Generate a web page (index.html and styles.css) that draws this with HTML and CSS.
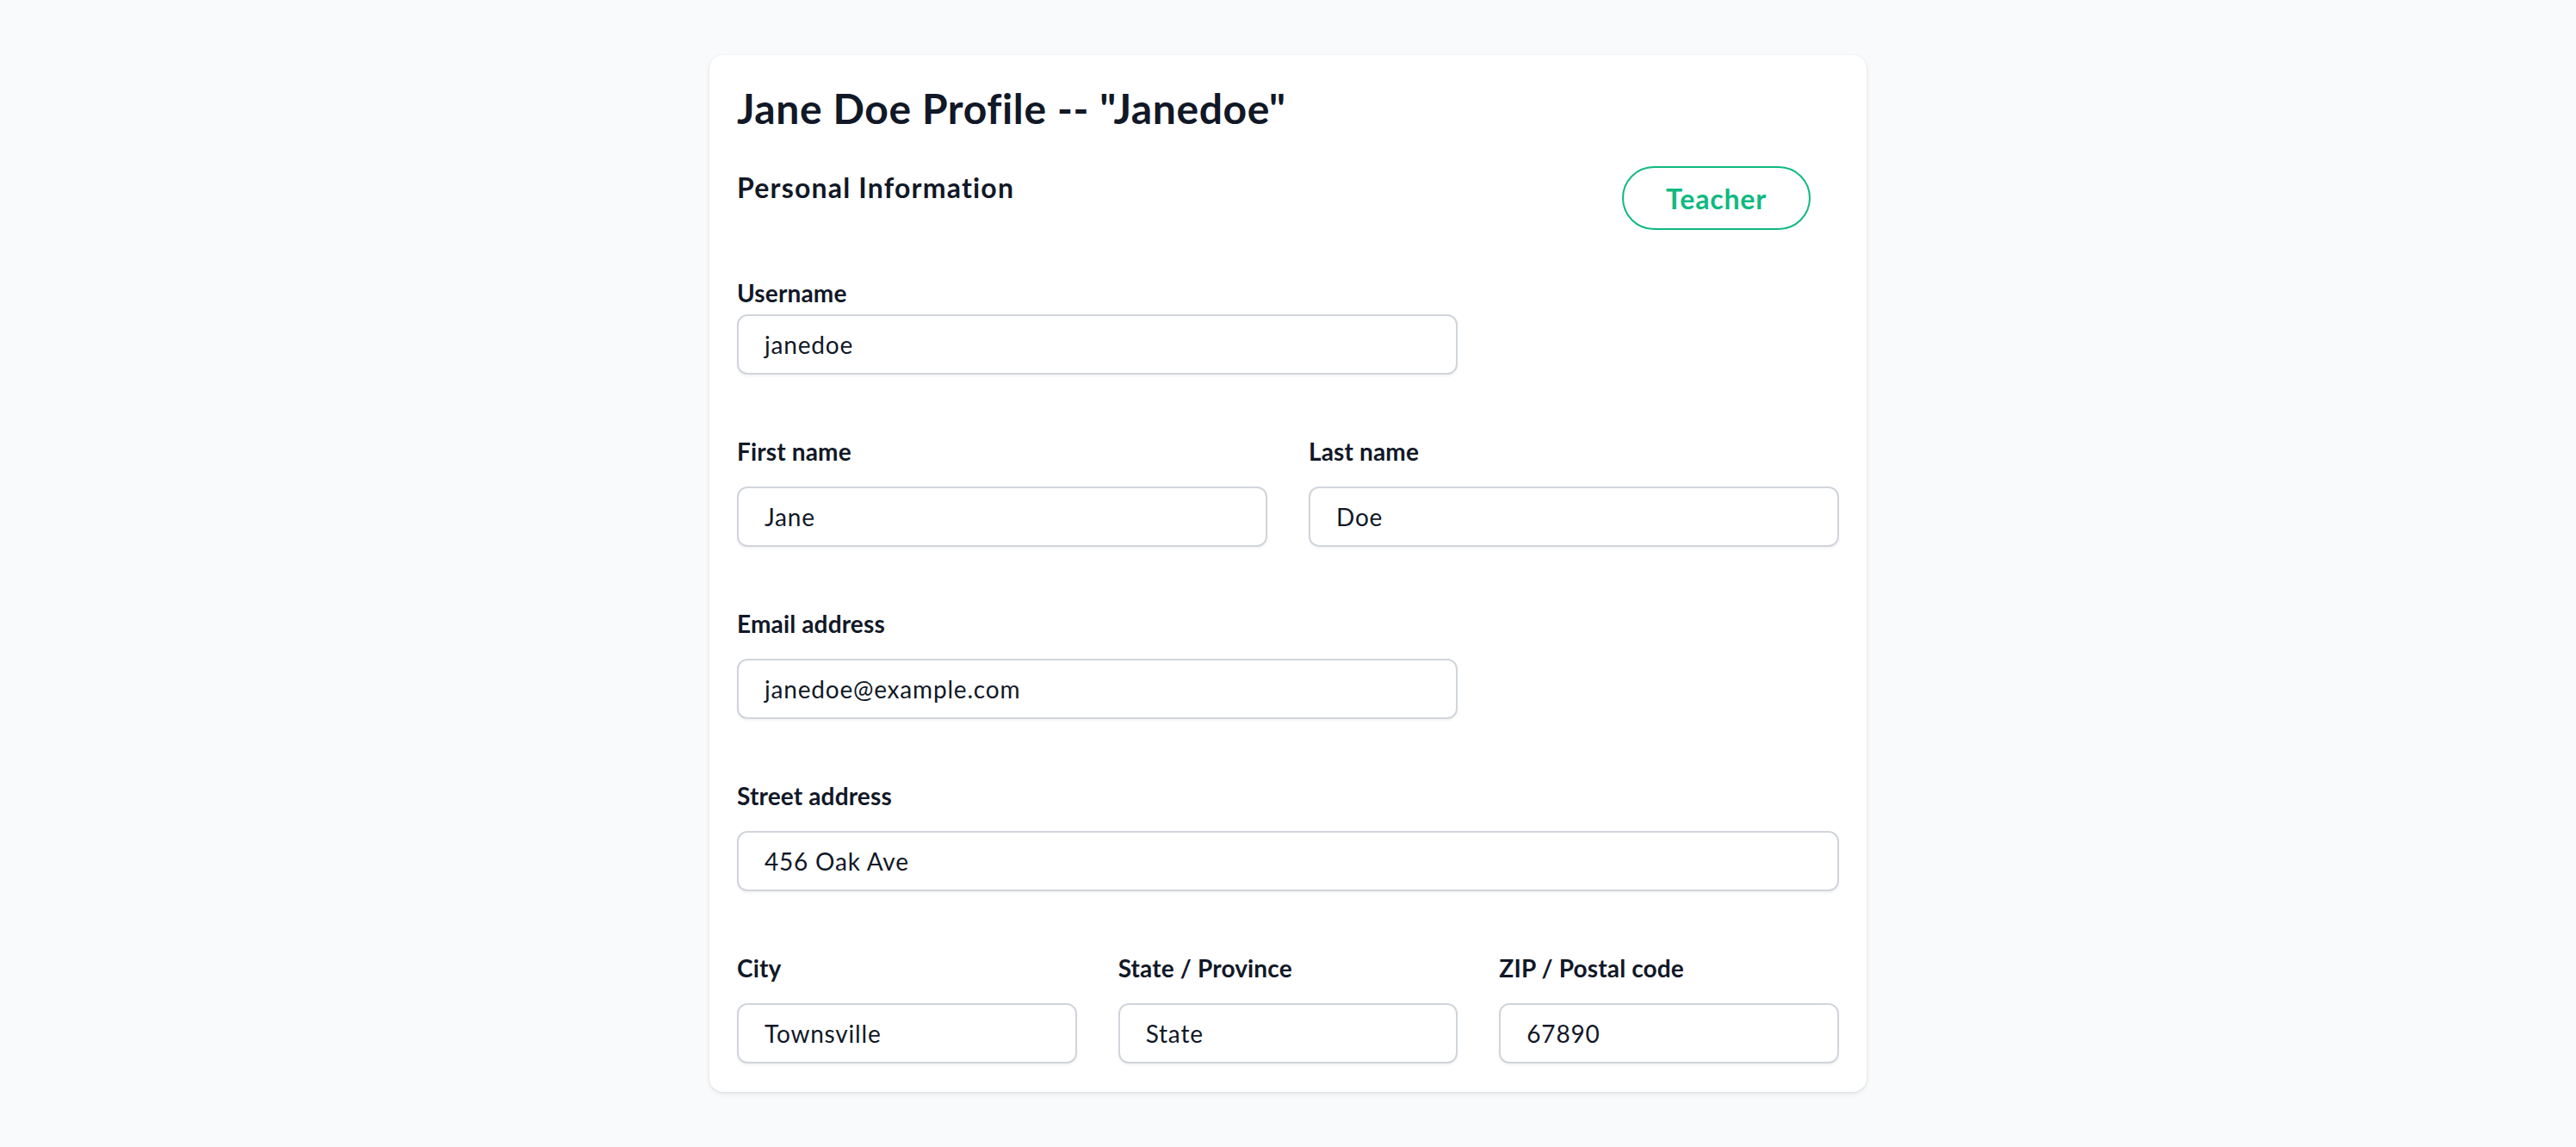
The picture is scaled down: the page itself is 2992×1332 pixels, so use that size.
FILE: index.html
```html
<!DOCTYPE html>
<html lang="en">
<head>
<meta charset="utf-8">
<title>Jane Doe Profile</title>
<link rel="stylesheet" href="styles.css">
</head>
<body>
<main class="card">
  <h1 class="title">Jane Doe Profile -- "Janedoe"</h1>
  <div class="section-head">
    <h2 class="section-title">Personal Information</h2>
    <span class="badge">Teacher</span>
  </div>
  <div class="form-grid">
    <div class="field span-4 first-field">
      <label class="label">Username</label>
      <div class="input">janedoe</div>
    </div>
    <div class="field span-3 row-start">
      <label class="label">First name</label>
      <div class="input">Jane</div>
    </div>
    <div class="field span-3">
      <label class="label">Last name</label>
      <div class="input">Doe</div>
    </div>
    <div class="field span-4 row-start">
      <label class="label">Email address</label>
      <div class="input">janedoe@example.com</div>
    </div>
    <div class="field span-6 row-start">
      <label class="label">Street address</label>
      <div class="input">456 Oak Ave</div>
    </div>
    <div class="field span-2 row-start">
      <label class="label">City</label>
      <div class="input">Townsville</div>
    </div>
    <div class="field span-2">
      <label class="label">State / Province</label>
      <div class="input">State</div>
    </div>
    <div class="field span-2">
      <label class="label">ZIP / Postal code</label>
      <div class="input">67890</div>
    </div>
  </div>
</main>
</body>
</html>
```
FILE: styles.css
```css
* { box-sizing: border-box; }

html, body {
  margin: 0;
  padding: 0;
  background: #f9fafb;
  font-family: "Lato", "Open Sans", sans-serif;
  color: #111827;
}

body {
  padding: 64px 0;
}

.card {
  width: 1344px;
  margin: 0 auto;
  padding: 30px 32px 33px;
  background: #ffffff;
  border-radius: 16px;
  box-shadow: 0 2px 6px rgba(0, 0, 0, 0.08), 0 1px 3px rgba(0, 0, 0, 0.06);
}

.title {
  margin: 0;
  font-size: 48px;
  line-height: 64px;
  font-weight: 700;
  letter-spacing: 0.6px;
  color: #111827;
}

.section-head {
  margin-top: 32px;
  display: flex;
  justify-content: space-between;
  align-items: flex-start;
}

.section-title {
  margin: 0;
  font-size: 32px;
  line-height: 56px;
  font-weight: 700;
  letter-spacing: 1.2px;
  color: #111827;
}

.badge {
  margin-top: 3px;
  margin-right: 33px;
  height: 74px;
  width: 219px;
  display: flex;
  align-items: center;
  justify-content: center;
  border: 2px solid #10b981;
  border-radius: 9999px;
  color: #10b981;
  font-size: 32px;
  font-weight: 700;
  letter-spacing: 0.8px;
}

.form-grid {
  margin-top: 53px;
  display: grid;
  grid-template-columns: repeat(6, minmax(0, 1fr));
  column-gap: 48px;
  row-gap: 69px;
}

.field {
  display: flex;
  flex-direction: column;
}

.span-2 { grid-column-end: span 2; }
.span-3 { grid-column-end: span 3; }
.span-4 { grid-column-end: span 4; }
.span-6 { grid-column-end: span 6; }
.row-start { grid-column-start: 1; }

.label {
  display: block;
  font-size: 28px;
  line-height: 40px;
  font-weight: 700;
  letter-spacing: 0.15px;
  color: #111827;
  margin-bottom: 21px;
}

.first-field .label { margin-bottom: 5px; }

.input {
  height: 70px;
  display: flex;
  align-items: center;
  padding: 0 30px;
  border: 2px solid #d1d5db;
  border-radius: 12px;
  background: #ffffff;
  box-shadow: 0 2px 3px rgba(0, 0, 0, 0.05);
  font-size: 28px;
  letter-spacing: 0.8px;
  color: #111827;
}
```
